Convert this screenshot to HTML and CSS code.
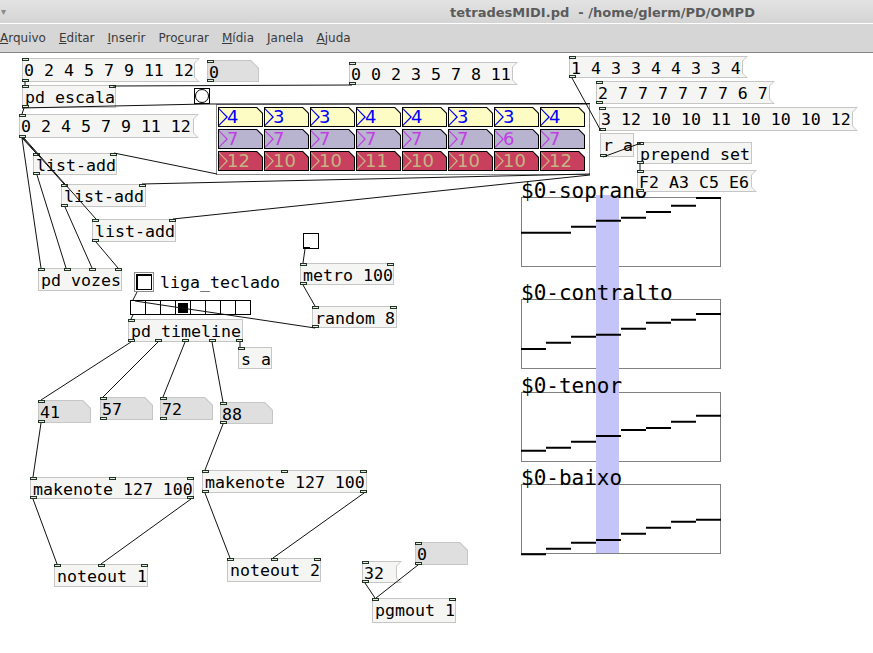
FILE: index.html
```html
<!DOCTYPE html>
<html lang="pt">
<head>
    <meta charset="UTF-8">
    <title>tetradesMIDI.pd - /home/glerm/PD/OMPD</title>
    <link rel="stylesheet" href="styles.css">
</head>
<body>
<div class="window">
    <header class="titlebar">
        <span class="winmenu">&#9662;</span>
        <span class="title">tetradesMIDI.pd  - /home/glerm/PD/OMPD</span>
    </header>
    <nav class="menubar">
        <span><u>A</u>rquivo</span>
        <span><u>E</u>ditar</span>
        <span><u>I</u>nserir</span>
        <span>Pro<u>c</u>urar</span>
        <span><u>M</u>ídia</span>
        <span><u>J</u>anela</span>
        <span><u>A</u>juda</span>
    </nav>

    <main class="patch">
        <!-- top left: scale -->
        <div class="box msg" style="left:22px;top:5px;width:178px;height:24px">0 2 4 5 7 9 11 12<span class="io in"><span></span></span><span class="io out"><span></span></span></div>
        <div class="box num" style="left:207px;top:7px;width:52px;height:22px">0<span class="io in"><span></span></span><span class="io out"><span></span></span></div>
        <div class="box msg" style="left:349px;top:9px;width:169px;height:23px">0 0 2 3 5 7 8 11<span class="io in"><span></span></span><span class="io out"><span></span></span></div>
        <div class="box obj" style="left:22px;top:32px;width:94px;height:23px">pd escala<span class="io in"><span></span><span></span></span><span class="io out"><span></span></span></div>
        <div class="bang" style="left:194px;top:35px"></div>
        <div class="box msg" style="left:19px;top:61px;width:180px;height:24px">0 2 4 5 7 9 11 12<span class="io in"><span></span></span><span class="io out"><span></span></span></div>

        <!-- intervals canvas -->
        <div class="cnv" style="left:216px;top:51px">
            <span class="cell c1">4</span><span class="cell c1">3</span><span class="cell c1">3</span><span class="cell c1">4</span>
            <span class="cell c1">4</span><span class="cell c1">3</span><span class="cell c1">3</span><span class="cell c1">4</span>
            <span class="cell c2">7</span><span class="cell c2">7</span><span class="cell c2">7</span><span class="cell c2">7</span>
            <span class="cell c2">7</span><span class="cell c2">7</span><span class="cell c2">6</span><span class="cell c2">7</span>
            <span class="cell c3">12</span><span class="cell c3">10</span><span class="cell c3">10</span><span class="cell c3">11</span>
            <span class="cell c3">10</span><span class="cell c3">10</span><span class="cell c3">10</span><span class="cell c3">12</span>
        </div>

        <!-- right column -->
        <div class="box msg" style="left:569px;top:3px;width:179px;height:22px">1 4 3 3 4 4 3 3 4<span class="io in"><span></span></span><span class="io out"><span></span></span></div>
        <div class="box msg" style="left:596px;top:28px;width:179px;height:23px">2 7 7 7 7 7 7 6 7<span class="io in"><span></span></span><span class="io out"><span></span></span></div>
        <div class="box msg" style="left:599px;top:54px;width:259px;height:24px">3 12 10 10 11 10 10 10 12<span class="io in"><span></span></span><span class="io out"><span></span></span></div>
        <div class="box obj" style="left:600px;top:80px;width:34px;height:24px">r a<span class="io out"><span></span></span></div>
        <div class="box obj" style="left:637px;top:89px;width:115px;height:22px">prepend set<span class="io in"><span></span></span><span class="io out"><span></span></span></div>
        <div class="box msg" style="left:637px;top:117px;width:120px;height:22px">F2 A3 C5 E6<span class="io in"><span></span></span><span class="io out"><span></span></span></div>

        <!-- voices -->
        <div class="box obj" style="left:33px;top:100px;width:84px;height:22px">list-add<span class="io in"><span></span><span></span></span><span class="io out"><span></span></span></div>
        <div class="box obj" style="left:61px;top:131px;width:85px;height:23px">list-add<span class="io in"><span></span><span></span></span><span class="io out"><span></span></span></div>
        <div class="box obj" style="left:92px;top:166px;width:84px;height:23px">list-add<span class="io in"><span></span><span></span></span><span class="io out"><span></span></span></div>
        <div class="box obj" style="left:38px;top:215px;width:84px;height:23px">pd vozes<span class="io in"><span></span><span></span><span></span><span></span></span></div>

        <!-- timeline -->
        <div class="toggle big" style="left:134px;top:219px"></div>
        <div class="label" style="left:160px;top:219px">liga_teclado</div>
        <div class="toggle" style="left:303px;top:180px"><span class="tout"></span></div>
        <div class="box obj" style="left:300px;top:210px;width:94px;height:22px">metro 100<span class="io in"><span></span><span></span></span><span class="io out"><span></span></span></div>
        <div class="box obj" style="left:312px;top:253px;width:85px;height:22px">random 8<span class="io in"><span></span><span></span></span><span class="io out"><span></span></span></div>
        <div class="hradio" style="left:130px;top:247px">
            <span></span><span></span><span></span><span class="on"></span>
            <span></span><span></span><span></span><span></span>
        </div>
        <div class="box obj" style="left:128px;top:266px;width:115px;height:23px">pd timeline<span class="io in"><span></span></span><span class="io out"><span></span><span></span><span></span><span></span><span></span></span></div>
        <div class="box obj" style="left:238px;top:294px;width:34px;height:22px">s a<span class="io in"><span></span></span></div>

        <div class="box num" style="left:38px;top:347px;width:53px;height:23px">41<span class="io in"><span></span></span><span class="io out"><span></span></span></div>
        <div class="box num" style="left:100px;top:344px;width:53px;height:23px">57<span class="io in"><span></span></span><span class="io out"><span></span></span></div>
        <div class="box num" style="left:160px;top:344px;width:53px;height:23px">72<span class="io in"><span></span></span><span class="io out"><span></span></span></div>
        <div class="box num" style="left:220px;top:349px;width:53px;height:22px">88<span class="io in"><span></span></span><span class="io out"><span></span></span></div>

        <div class="box obj" style="left:30px;top:424px;width:164px;height:22px">makenote 127 100<span class="io in"><span></span><span></span><span></span></span><span class="io out"><span></span><span></span></span></div>
        <div class="box obj" style="left:202px;top:417px;width:165px;height:23px">makenote 127 100<span class="io in"><span></span><span></span><span></span></span><span class="io out"><span></span><span></span></span></div>
        <div class="box obj" style="left:54px;top:511px;width:94px;height:23px">noteout 1<span class="io in"><span></span><span></span><span></span></span></div>
        <div class="box obj" style="left:227px;top:505px;width:94px;height:24px">noteout 2<span class="io in"><span></span><span></span><span></span></span></div>

        <div class="box msg" style="left:362px;top:508px;width:40px;height:22px">32<span class="io in"><span></span></span><span class="io out"><span></span></span></div>
        <div class="box num" style="left:415px;top:489px;width:53px;height:23px">0<span class="io in"><span></span></span><span class="io out"><span></span></span></div>
        <div class="box obj" style="left:372px;top:545px;width:84px;height:25px">pgmout 1<span class="io in"><span></span><span></span></span></div>

        <!-- arrays -->
        <div class="blue" style="left:596px;top:142px;height:358px"></div>
        <div class="garray" style="left:521px;top:144px">
            <span class="aname">$0-soprano</span>
            <svg width="200" height="70"><path d="M0 35.7H50M50 29.7H75M75 23.7H100M100 20.7H125M125 15H150M150 8.7H175M175 1H200"/></svg>
        </div>
        <div class="garray" style="left:521px;top:246px">
            <span class="aname">$0-contralto</span>
            <svg width="200" height="70"><path d="M0 50H25M25 43.7H50M50 37.7H75M75 35.7H100M100 29.7H125M125 23.7H150M150 20.7H175M175 15H200"/></svg>
        </div>
        <div class="garray" style="left:521px;top:339px">
            <span class="aname">$0-tenor</span>
            <svg width="200" height="70"><path d="M0 58.7H25M25 55.7H50M50 49.7H75M75 44H100M100 38H125M125 36H150M150 29.7H175M175 23.7H200"/></svg>
        </div>
        <div class="garray" style="left:521px;top:431px">
            <span class="aname">$0-baixo</span>
            <svg width="200" height="70"><path d="M0 70.3H25M25 64.7H50M50 58.7H75M75 56H100M100 49.7H125M125 43.7H150M150 37.7H175M175 35.7H200"/></svg>
        </div>

        <!-- patch cords -->
        <svg class="cords" width="873" height="600">
            <path d="M25 29L25 32"/>
            <path d="M352 32L113 33"/>
            <path d="M22 55L205 51L590 50.5"/>
            <path d="M24 55L22 61"/>
            <path d="M22 85L36 100"/>
            <path d="M23 85L64 131"/>
            <path d="M24 85L96 166"/>
            <path d="M22 85L41 215"/>
            <path d="M37 122L66 215"/>
            <path d="M65 154L92 215"/>
            <path d="M96 189L118 215"/>
            <path d="M114 100L217 121"/>
            <path d="M142 131L590 121"/>
            <path d="M173 166L590 122"/>
            <path d="M572 25L601 78"/>
            <path d="M603 104L641 90"/>
            <path d="M640 111L640 117"/>
            <path d="M137 239L133 247"/>
            <path d="M133 262L131 266"/>
            <path d="M315 275L135 248"/>
            <path d="M305 196L303 210"/>
            <path d="M303 232L315 253"/>
            <path d="M131 289L41 347"/>
            <path d="M158 289L103 344"/>
            <path d="M185 289L163 344"/>
            <path d="M212 289L223 349"/>
            <path d="M240 289L240 294"/>
            <path d="M41 370L33 424"/>
            <path d="M223 371L205 417"/>
            <path d="M33 446L57 511"/>
            <path d="M191 446L101 511"/>
            <path d="M205 440L230 505"/>
            <path d="M364 440L273 505"/>
            <path d="M365 530L375 545"/>
            <path d="M418 512L376 545"/>
        </svg>
    </main>
</div>
</body>
</html>
```

FILE: styles.css
```css
body {
    margin: 0;
    background: #fff;
    font-family: 'DejaVu Sans', sans-serif;
}
.window {
    width: 873px;
    height: 653px;
    overflow: hidden;
}
.titlebar {
    position: relative;
    height: 23px;
    line-height: 23px;
    background: linear-gradient(#e3e3e3, #d4d4d4);
    border-bottom: 1px solid #fff;
    padding-left: 450px;
    box-sizing: content-box;
}
.titlebar .winmenu {
    position: absolute;
    left: 1px;
    top: 0;
    font-size: 10px;
    color: #8a8a8a;
}
.titlebar .title {
    font-size: 13px;
    font-weight: bold;
    color: #5b5b5b;
    white-space: pre;
}
.menubar {
    display: flex;
    gap: 13px;
    height: 28px;
    line-height: 28px;
    background: #d6d6d6;
    border-bottom: 1px solid #858585;
    font-size: 12px;
    color: #3a3a3a;
}
.patch {
    position: relative;
    height: 600px;
    background: #fff;
    font-family: 'DejaVu Sans Mono', monospace;
    font-size: 16.6px;
    color: #000;
}

/* boxes */
.box {
    position: absolute;
    box-sizing: border-box;
    padding: 1px 0 0 2px;
    line-height: 21px;
    white-space: pre;
}
.obj {
    background: #f5f6f4;
    border: 1px solid #c6c6c6;
}
.msg, .num {
    z-index: 3;
    line-height: 23px;
    padding-left: 2px;
}
.msg {
    background: #c6c6c6;
    clip-path: polygon(0 0, 100% 0, calc(100% - 5px) 5px, calc(100% - 5px) calc(100% - 5px), 100% 100%, 0 100%);
}
.msg::before {
    content: '';
    position: absolute;
    top: 1px;
    left: 1px;
    bottom: 1px;
    right: 2px;
    z-index: -1;
    background: #f5f6f4;
    clip-path: polygon(0 0, 100% 0, calc(100% - 4px) 4px, calc(100% - 4px) calc(100% - 4px), 100% 100%, 0 100%);
}
.num {
    background: #c6c6c6;
    clip-path: polygon(0 0, calc(100% - 8px) 0, 100% 8px, 100% 100%, 0 100%);
}
.num::before {
    content: '';
    position: absolute;
    inset: 1px;
    z-index: -1;
    background: #dfdfdf;
    clip-path: polygon(0 0, calc(100% - 7.5px) 0, 100% 7.5px, 100% 100%, 0 100%);
}

/* inlets / outlets */
.io {
    position: absolute;
    left: -1px;
    right: -1px;
    height: 3px;
    display: flex;
    justify-content: space-between;
}
.io.in { top: -1px; }
.io.out { bottom: -1px; }
.msg .io, .num .io { left: 0; right: 0; }
.msg .io.in, .num .io.in { top: 0; }
.msg .io.out, .num .io.out { bottom: 0; }
.io span {
    width: 7px;
    height: 3px;
    box-sizing: border-box;
    border: 1px solid #233323;
    background: #e3ece3;
}

/* gui objects */
.bang {
    position: absolute;
    width: 16px;
    height: 16px;
    box-sizing: border-box;
    border: 1px solid #000;
    background: #fff;
}
.bang::after {
    content: '';
    position: absolute;
    inset: 0;
    border: 1px solid #000;
    border-radius: 50%;
}
.toggle {
    position: absolute;
    width: 16px;
    height: 16px;
    box-sizing: border-box;
    border: 1px solid #000;
    background: #fff;
}
.toggle .tout {
    position: absolute;
    left: -1px;
    bottom: -1px;
    width: 7px;
    height: 2px;
    background: #000;
}
.toggle.big {
    width: 20px;
    height: 20px;
    border-color: #8c8c8c;
}
.toggle.big::after {
    content: '';
    position: absolute;
    left: 1px;
    top: 1px;
    width: 16px;
    height: 16px;
    box-sizing: border-box;
    border: 1px solid #000;
    border-top-width: 2px;
    border-left-width: 2px;
}
.label {
    position: absolute;
    line-height: 21px;
    white-space: pre;
}
.hradio {
    position: absolute;
    display: grid;
    grid-template-columns: repeat(8, 14px);
    grid-auto-rows: 13px;
    gap: 1px;
    border: 1px solid #000;
    background: #000;
}
.hradio span {
    position: relative;
    background: #fff;
}
.hradio .on::after {
    content: '';
    position: absolute;
    inset: 2px 2px 1px 2px;
    background: #000;
}

/* canvas with interval number boxes */
.cnv {
    position: absolute;
    width: 374px;
    height: 71px;
    box-sizing: border-box;
    border: 1px solid #8c8c8c;
    background: #fff;
    padding: 2px 0 0 1px;
    display: grid;
    grid-template-columns: repeat(8, 45px);
    grid-auto-rows: 20px;
    gap: 2px 1px;
}
.cell {
    position: relative;
    isolation: isolate;
    background: #000;
    clip-path: polygon(0 0, calc(100% - 6px) 0, 100% 6px, 100% 100%, 0 100%);
    font-family: 'DejaVu Sans', sans-serif;
    font-size: 18px;
    line-height: 20px;
    padding-left: 9px;
}
.cell::before {
    content: '';
    position: absolute;
    inset: 1px;
    z-index: -1;
    background: var(--bg);
    clip-path: polygon(0 0, calc(100% - 5.5px) 0, 100% 5.5px, 100% 100%, 0 100%);
}
.cell::after {
    content: '';
    position: absolute;
    left: 1px;
    top: 1px;
    width: 9px;
    height: 18px;
    background: currentColor;
    clip-path: polygon(0 0, 100% 50%, 0 100%, 0 calc(100% - 1.6px), calc(100% - 1.8px) 50%, 0 1.6px);
}
.c1 { --bg: #fcfcc4; color: #0000fc; }
.c2 { --bg: #b8b4d0; color: #c23ee2; }
.c3 { --bg: #c8405e; color: #c6b482; }

/* arrays */
.blue {
    position: absolute;
    width: 23px;
    z-index: 1;
    background: #c4c4f8;
}
.garray {
    position: absolute;
    width: 200px;
    height: 70px;
    box-sizing: border-box;
    border: 1px solid #808080;
}
.garray .aname {
    position: absolute;
    left: -1px;
    bottom: calc(100% - 4px);
    z-index: 2;
    font-size: 21px;
    line-height: 21px;
    white-space: pre;
}
.garray svg {
    position: absolute;
    left: -1px;
    top: -1px;
    z-index: 2;
    overflow: visible;
}
.garray path {
    stroke: #000;
    stroke-width: 2;
    fill: none;
}

/* cords */
.cords {
    position: absolute;
    left: 0;
    top: 0;
    z-index: 4;
    pointer-events: none;
}
.cords path {
    stroke: #111;
    stroke-width: 1;
    fill: none;
}
```
